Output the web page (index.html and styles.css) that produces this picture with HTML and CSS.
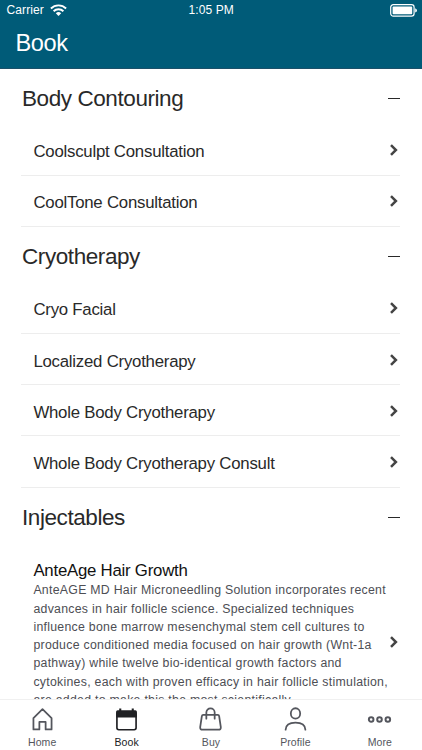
FILE: index.html
```html
<!DOCTYPE html>
<html lang="en">
<head>
<meta charset="utf-8">
<title>Book</title>
<link rel="stylesheet" href="styles.css">
</head>
<body>
<svg class="defs" width="0" height="0"><defs>
<symbol id="chev" viewBox="0 0 10 14"><path d="M2 2.2 6.9 7 2 11.8" fill="none" stroke="#444" stroke-width="2.5"/></symbol>
</defs></svg>
<div class="app">
  <header class="top">
    <div class="status">
      <div class="carrier"><span>Carrier</span>
        <svg width="17" height="12" viewBox="0 0 17 12"><g fill="none" stroke="#fff" stroke-width="1.9"><path d="M.9 4.5a10.8 10.8 0 0 1 15.2 0M3.6 7.3a7 7 0 0 1 9.8 0"/></g><path d="M5.8 9.2a3.9 3.9 0 0 1 5.4 0L8.5 11.9Z" fill="#fff"/></svg>
      </div>
      <div class="time">1:05 PM</div>
      <div class="battery"><svg width="28" height="13" viewBox="0 0 28 13"><rect x=".7" y=".7" width="23.4" height="11.4" rx="2.6" fill="none" stroke="#fff" stroke-width="1.2"/><rect x="2.6" y="2.6" width="19.6" height="7.6" rx=".8" fill="#fff"/><path d="M25.2 4.3q1.8.7 1.8 2.1t-1.8 2.1Z" fill="#fff"/></svg></div>
    </div>
    <h1>Book</h1>
  </header>
  <main>
    <h2><span>Body Contouring</span><i class="minus"></i></h2>
    <div class="row"><span>Coolsculpt Consultation</span><svg class="chev"><use href="#chev"/></svg></div>
    <div class="row"><span>CoolTone Consultation</span><svg class="chev"><use href="#chev"/></svg></div>
    <h2><span>Cryotherapy</span><i class="minus"></i></h2>
    <div class="row"><span>Cryo Facial</span><svg class="chev"><use href="#chev"/></svg></div>
    <div class="row"><span>Localized Cryotherapy</span><svg class="chev"><use href="#chev"/></svg></div>
    <div class="row"><span>Whole Body Cryotherapy</span><svg class="chev"><use href="#chev"/></svg></div>
    <div class="row"><span>Whole Body Cryotherapy Consult</span><svg class="chev"><use href="#chev"/></svg></div>
    <h2><span>Injectables</span><i class="minus"></i></h2>
    <div class="row detail">
      <div class="copy"><h3>AnteAge Hair Growth</h3>
        <p>AnteAGE MD Hair Microneedling Solution incorporates recent<br>advances in hair follicle science. Specialized techniques<br>influence bone marrow mesenchymal stem cell cultures to<br>produce conditioned media focused on hair growth (Wnt-1a<br>pathway) while twelve bio-identical growth factors and<br>cytokines, each with proven efficacy in hair follicle stimulation,<br>are added to make this the most scientifically</p></div>
      <svg class="chev"><use href="#chev"/></svg>
    </div>
  </main>
  <nav>
    <a><svg viewBox="0 0 24 24"><path d="M3.3 10.6 12 2l8.7 8.6v10.9H15v-7.2H9v7.2H3.3Z" fill="none" stroke="currentColor" stroke-width="1.7" stroke-linejoin="round"/></svg><span>Home</span></a>
    <a class="active"><svg viewBox="0 0 24 24"><path d="M2 10V4.5Q2 3 3.5 3H5V1.5h2V3h10V1.5h2V3h1.5Q22 3 22 4.5V10Z" fill="currentColor"/><rect x="2.8" y="5" width="18.4" height="16.8" rx="1.8" fill="none" stroke="currentColor" stroke-width="1.6"/></svg><span>Book</span></a>
    <a><svg viewBox="0 0 24 24"><g fill="none" stroke="currentColor" stroke-width="1.7" stroke-linecap="round" stroke-linejoin="round"><path d="M5 7.6H19Q20.1 7.6 20.3 8.7L21.9 19.3Q22.1 21.8 19.7 21.8H4.3Q1.9 21.8 2.1 19.3L3.7 8.7Q3.9 7.6 5 7.6Z"/><path d="M8 11.2V5.3A4 4 0 0 1 16 5.3V11.2"/></g></svg><span>Buy</span></a>
    <a><svg viewBox="0 0 24 24"><g fill="none" stroke="currentColor" stroke-width="1.7" stroke-linecap="round"><ellipse cx="12" cy="6.2" rx="4.5" ry="5"/><path d="M2.5 21.8C2.7 17.2 5.8 15 12 15S21.3 17.2 21.5 21.8"/></g></svg><span>Profile</span></a>
    <a><svg viewBox="0 0 24 24"><g fill="none" stroke="currentColor" stroke-width="1.9"><circle cx="4" cy="12" r="2.2"/><circle cx="12" cy="12" r="2.2"/><circle cx="20" cy="12" r="2.2"/></g></svg><span>More</span></a>
  </nav>
</div>
</body>
</html>
```
FILE: styles.css
```css
* { box-sizing: border-box; }
body { margin: 0; background: #fff; font-family: "Liberation Sans", Arial, sans-serif; color: #292929; }
.defs { display: block; height: 0; }
.app { width: 422px; height: 750px; display: flex; flex-direction: column; overflow: hidden; }
.top { height: 69px; flex: none; background: #005b78; color: #fff; border-bottom: 1px solid #1b5069; }
.status { height: 20px; padding: 0 4px 0 6.5px; display: grid; grid-template-columns: 1fr auto 1fr; align-items: center; font-size: 12px; line-height: 20px; letter-spacing: .1px; }
.carrier { display: flex; align-items: center; gap: 6px; }
.time { margin-right: 2px; }
.battery { display: flex; justify-content: flex-end; }
h1 { margin: 9px 0 0 15.5px; font-size: 23.6px; line-height: 28px; font-weight: 400; letter-spacing: -.4px; }
main { flex: 1; min-height: 0; overflow: hidden; padding: 0 22px 0 21px; }
h2 { margin: 0; height: 55.5px; padding: 3px .5px 0 1px; display: flex; align-items: center; justify-content: space-between; font-size: 22.5px; line-height: 28px; font-weight: 400; letter-spacing: -.42px; }
h2 span { padding-top: 2px; }
.minus { width: 12px; height: 1px; margin-top: 1px; background: #292929; }
.row { height: 51.3px; border-bottom: 1px solid #ededed; padding: 3px 1.5px 0 12.4px; display: flex; align-items: center; justify-content: space-between; font-size: 16.8px; line-height: 20px; letter-spacing: -.23px; }
.row > span { padding-top: 2px; }
.chev { width: 10px; height: 14px; flex: none; margin-top: -2px; }
.detail { height: 198px; align-items: flex-start; padding-top: 18px; }
.detail .chev { margin-top: 74px; }
.copy { width: 0; white-space: nowrap; }
h3 { margin: 0; font-size: 16.8px; line-height: 20px; font-weight: 400; color: #111; }
p { margin: 0; font-size: 12.3px; line-height: 18.3px; letter-spacing: .28px; color: #4d4e54; }
nav { height: 51px; flex: none; background: #fff; border-top: 1px solid #f0f0f0; display: grid; grid-template-columns: repeat(5, 1fr); }
nav a { display: flex; flex-direction: column; align-items: center; padding-top: 7px; color: #54565d; }
nav svg { width: 25px; height: 25px; }
nav span { font-size: 10.5px; line-height: 12px; margin-top: 4px; letter-spacing: .1px; }
nav .active { color: #202124; }
```
